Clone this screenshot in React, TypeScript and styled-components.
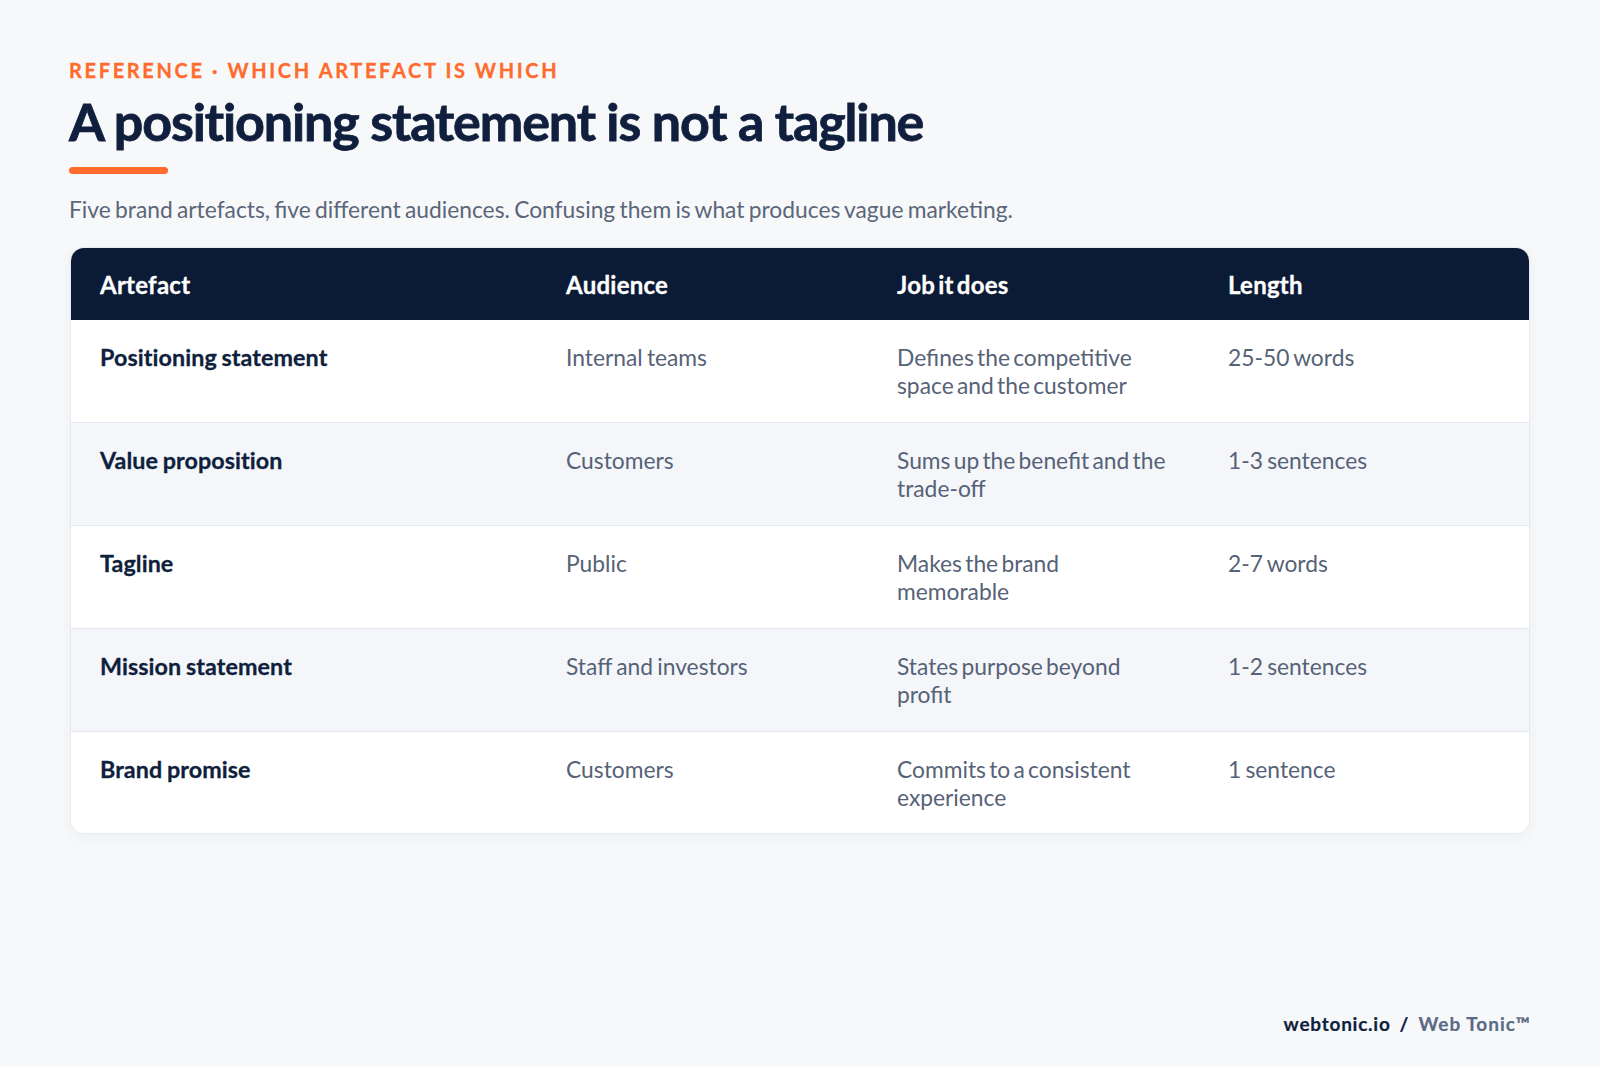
import React from 'react';
import styled, { createGlobalStyle } from 'styled-components';

type Row = {
  artefact: string;
  audience: string;
  job: string;
  length: string;
};

const rows: Row[] = [
  { artefact: 'Positioning statement', audience: 'Internal teams', job: 'Defines the competitive space and the customer', length: '25-50 words' },
  { artefact: 'Value proposition', audience: 'Customers', job: 'Sums up the benefit and the trade-off', length: '1-3 sentences' },
  { artefact: 'Tagline', audience: 'Public', job: 'Makes the brand memorable', length: '2-7 words' },
  { artefact: 'Mission statement', audience: 'Staff and investors', job: 'States purpose beyond profit', length: '1-2 sentences' },
  { artefact: 'Brand promise', audience: 'Customers', job: 'Commits to a consistent experience', length: '1 sentence' },
];

const GlobalStyle = createGlobalStyle`
  html, body {
    margin: 0;
    padding: 0;
    background: #f7f8fa;
  }
  body {
    font-family: Lato, "Noto Sans", sans-serif;
  }
`;

const Page = styled.div`
  width: 1600px;
  height: 1067px;
  box-sizing: border-box;
  padding: 57px 70px 0 69px;
  display: flex;
  flex-direction: column;
  background: #f7f8fa;
  overflow: hidden;
`;

const Eyebrow = styled.div`
  font-size: 20px;
  line-height: 26px;
  font-weight: 700;
  letter-spacing: 2.65px;
  -webkit-text-stroke: 0.3px #ff6b2c;
  color: #ff6b2c;
`;

const Title = styled.h1`
  margin: 7px 0 0;
  font-size: 52px;
  line-height: 62px;
  font-weight: 700;
  letter-spacing: -1.12px;
  -webkit-text-stroke: 0.8px #0f1f3d;
  color: #0f1f3d;
`;

const Rule = styled.div`
  width: 99px;
  height: 7px;
  margin-top: 15px;
  border-radius: 4px;
  background: #ff6b2c;
`;

const Lead = styled.p`
  margin: 19px 0 0;
  font-size: 22.8px;
  line-height: 32px;
  word-spacing: -1.6px;
  color: #5a6679;
`;

const Table = styled.div`
  margin: 22px 0 0 1px;
  border: 1px solid #e6e9ef;
  border-radius: 14px;
  overflow: hidden;
  background: #fff;
  box-shadow: 0 4px 14px rgba(15, 31, 61, 0.04);
`;

const Line = styled.div<{ $striped?: boolean }>`
  display: grid;
  grid-template-columns: 465px 331px 331px 331px;
  height: 103px;
  box-sizing: border-box;
  background: ${({ $striped }) => ($striped ? '#f4f6fa' : '#fff')};
  border-bottom: 1px solid #e6e9ef;

  &:last-child {
    height: 101px;
    border-bottom: none;
  }
`;

const HeadLine = styled(Line)`
  height: 72px;
  background: #0b1b35;
  border-bottom: none;
`;

const HeadCell = styled.div`
  padding: 0 30px;
  display: flex;
  align-items: center;
  font-size: 24px;
  font-weight: 700;
  letter-spacing: 0.25px;
  word-spacing: -3px;
  -webkit-text-stroke: 0.3px #fff;
  color: #fff;

  &:first-child {
    padding-left: 29px;
  }
`;

const Cell = styled.div`
  padding: 22.5px 26px 0 30px;
  font-size: 22.8px;
  line-height: 28px;
  word-spacing: -1.6px;
  color: #566277;
`;

const JobCell = styled(Cell)`
  word-spacing: -2.6px;
`;

const NameCell = styled(Cell)`
  padding-left: 29px;
  font-size: 23.3px;
  font-weight: 700;
  letter-spacing: 0.08px;
  word-spacing: -1px;
  -webkit-text-stroke: 0.3px #0f1f3d;
  color: #0f1f3d;
`;

const Footer = styled.div`
  margin-top: auto;
  margin-bottom: 30px;
  margin-right: -1px;
  align-self: flex-end;
  display: flex;
  gap: 9px;
  font-size: 19px;
  line-height: 26px;
  font-weight: 700;
  letter-spacing: 1px;
  -webkit-text-stroke: 0.2px currentColor;
  color: #0f1f3d;
`;

const Site = styled.span`
  letter-spacing: 0.75px;
`;

const Brand = styled.span`
  color: #5a6b85;
`;

export default function App() {
  return (
    <Page>
      <GlobalStyle />
      <Eyebrow>REFERENCE · WHICH ARTEFACT IS WHICH</Eyebrow>
      <Title>A positioning statement is not a tagline</Title>
      <Rule />
      <Lead>Five brand artefacts, five different audiences. Confusing them is what produces vague marketing.</Lead>
      <Table>
        <HeadLine>
          <HeadCell>Artefact</HeadCell>
          <HeadCell>Audience</HeadCell>
          <HeadCell>Job it does</HeadCell>
          <HeadCell>Length</HeadCell>
        </HeadLine>
        {rows.map((row, i) => (
          <Line key={row.artefact} $striped={i % 2 === 1}>
            <NameCell>{row.artefact}</NameCell>
            <Cell>{row.audience}</Cell>
            <JobCell>{row.job}</JobCell>
            <Cell>{row.length}</Cell>
          </Line>
        ))}
      </Table>
      <Footer>
        <Site>webtonic.io</Site>
        <span>/</span>
        <Brand>Web Tonic™</Brand>
      </Footer>
    </Page>
  );
}
